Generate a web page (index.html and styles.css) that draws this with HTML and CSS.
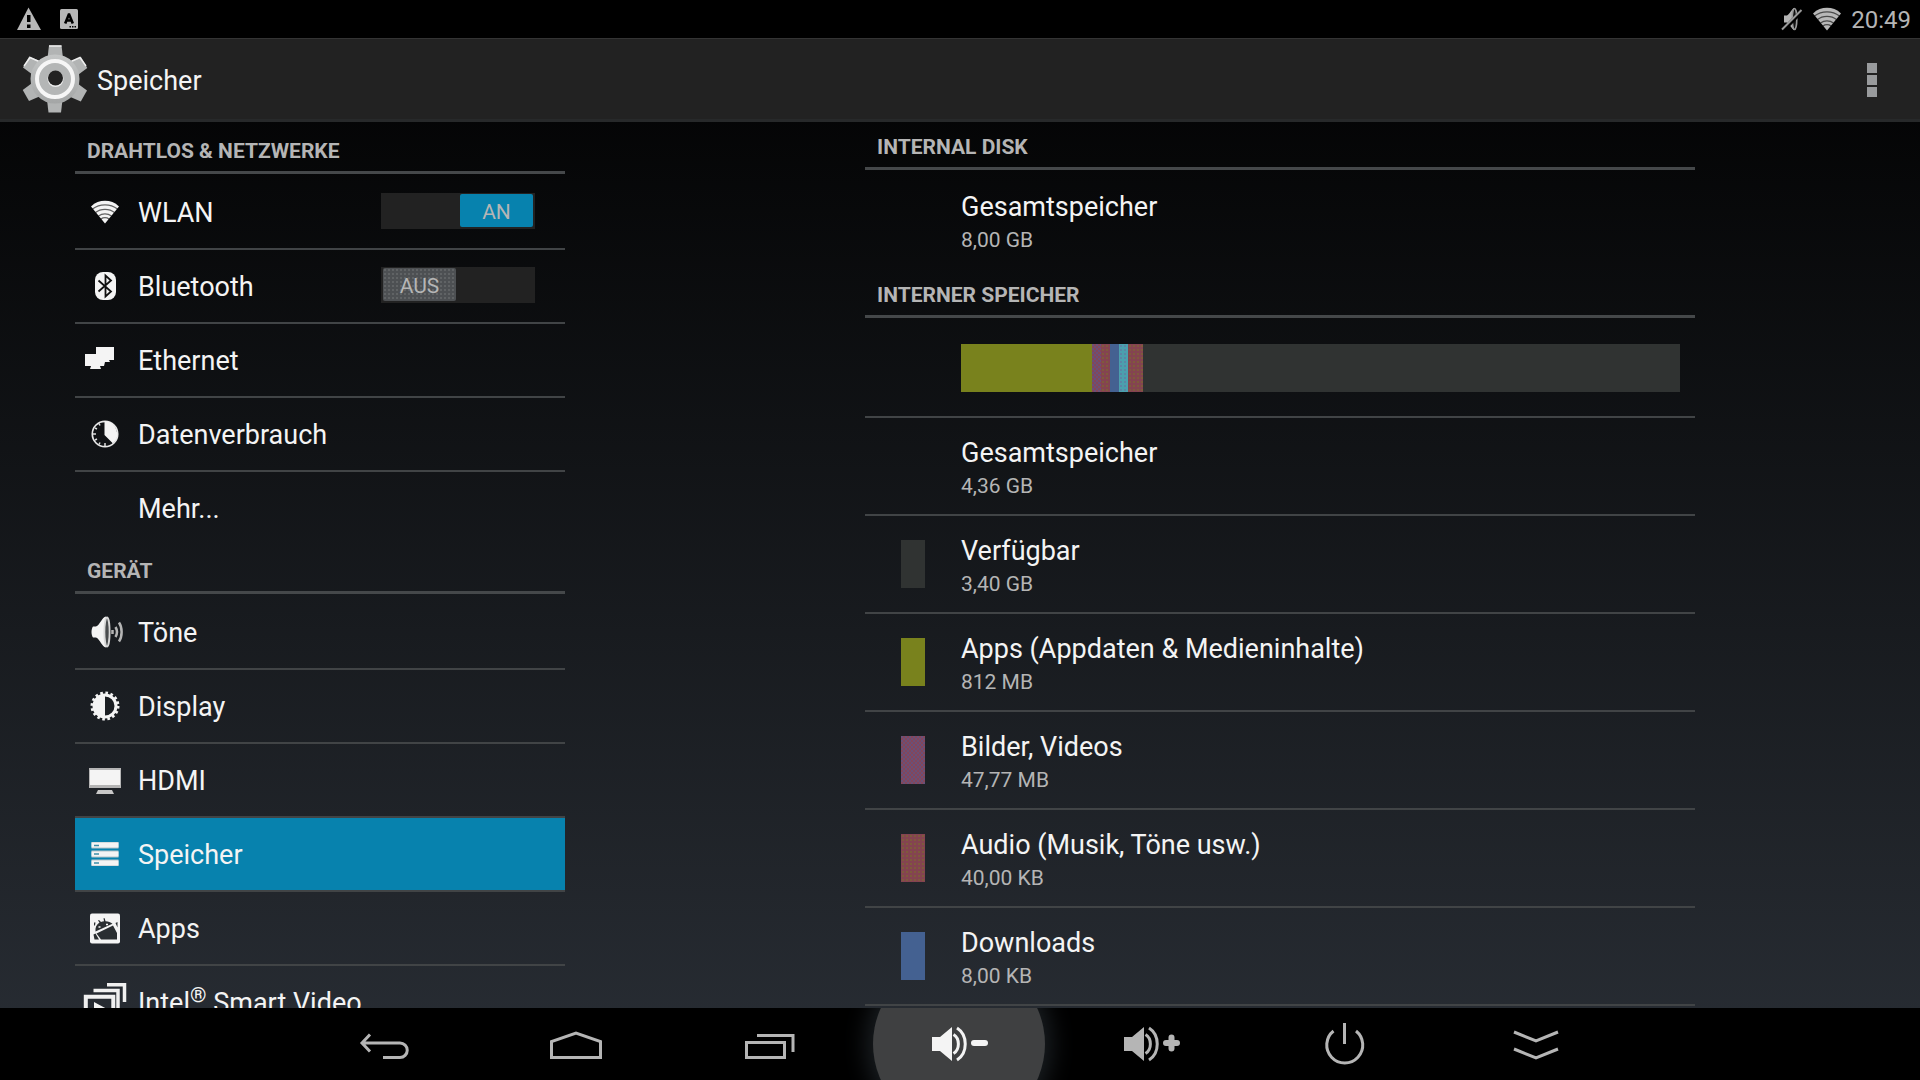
FILE: index.html
```html
<!DOCTYPE html>
<html lang="de">
<head>
<meta charset="utf-8">
<title>Speicher</title>
<link rel="stylesheet" href="styles.css">
</head>
<body>
<svg class="defs" aria-hidden="true">
  <defs>
    <symbol id="wifi" viewBox="0 0 30 24">
      <path fill="currentColor" d="M15 23.500L1 6.500C5 2.500 10 .800 15 .800S25 2.500 29 6.500z"/>
      <g fill="none" stroke="#000" stroke-opacity=".6" stroke-width="1.300">
        <path d="M2.500 9C6 6.300 10.500 4.800 15 4.800S24 6.300 27.500 9"/>
        <path d="M5.500 12.500C8 10.400 11.500 9.300 15 9.300s7 1.100 9.500 3.200"/>
        <path d="M8.500 16c2-1.500 4-2.200 6.500-2.200s4.500.700 6.500 2.200"/>
        <path d="M11 19c1.300-1 2.500-1.300 4-1.300s2.700.300 4 1.300"/>
      </g>
    </symbol>
    <symbol id="speaker" viewBox="0 0 36 36">
      <path fill="currentColor" d="M1 11h8L21 1v34L9 25H1z" />
      <path fill="none" stroke="currentColor" stroke-width="3" d="M22.500 8.500c6.500 4 6.500 15 0 19M26 2c11 7 11 25 0 32"/>
    </symbol>
  </defs>
</svg>

<header class="status">
  <div class="status-group">
    <svg width="26" height="24" viewBox="0 0 26 24" role="img" aria-label="Warnung"><path fill="#b8b8b8" d="M12.500.500L25 23H1z"/><path d="M11 8h3.500v7H11zM11 17.500h3.500V21H11z"/></svg>
    <svg width="18" height="20" viewBox="0 0 18 20" role="img" aria-label="Tastatur"><rect width="18" height="20" rx="1.500" fill="#b8b8b8"/><path fill="none" stroke="#000" stroke-width="2.600" d="M5.200 14.500L8.800 5.500h.4l3.600 9M6.500 11.500h5"/><path d="M9.500 17h1.500v1.500H9.500zM12 17h1.500v1.500H12zM14.500 17H16v1.500h-1.500z"/></svg>
  </div>
  <div class="status-group status-right">
    <svg width="22" height="26" viewBox="0 0 22 26" role="img" aria-label="Stumm"><path fill="#b4b4b4" d="M3 9.500h3C9 8 10.500 3 13 2v22c-2.500-1-4-6-7-7.500H3z"/><ellipse cx="13.500" cy="13" rx="2.300" ry="10.500" fill="#111" stroke="#999" stroke-width="1.600"/><path d="M2 24.500L21 5" stroke="#000" stroke-width="4"/><path d="M1 23.500L20.500 4" stroke="#999" stroke-width="2"/></svg>
    <svg class="status-wifi" width="30" height="24"><use href="#wifi"/></svg>
    <time>20:49</time>
  </div>
</header>

<div class="actionbar">
  <svg class="gear" width="68" height="70" viewBox="0 0 68 70" aria-hidden="true">
    <defs><linearGradient id="metal" x1="0" y1="0" x2="0" y2="1"><stop offset="0" stop-color="#c4c6c6"/><stop offset="1" stop-color="#a4a6a6"/></linearGradient></defs>
    <g fill="#b2b4b4">
      <path d="M26.500 14L28 1.500h12.500L42 14z"/>
      <path d="M26.500 14L28 1.500h12.500L42 14z" transform="rotate(60 34 35)"/>
      <path d="M26.500 14L28 1.500h12.500L42 14z" transform="rotate(120 34 35)"/>
      <path d="M26.500 14L28 1.500h12.500L42 14z" transform="rotate(180 34 35)"/>
      <path d="M26.500 14L28 1.500h12.500L42 14z" transform="rotate(240 34 35)"/>
      <path d="M26.500 14L28 1.500h12.500L42 14z" transform="rotate(300 34 35)"/>
    </g>
    <path d="M28 2h12.500M3 22l6-8.500 9 4M65 22l-6-8.500-9 4" fill="none" stroke="#eee" stroke-width="1.500"/>
    <circle cx="34" cy="35" r="24.500" fill="url(#metal)"/>
    <circle cx="34" cy="35" r="18" fill="#b4b6b6" stroke="#f6f6f6" stroke-width="4"/>
    <circle cx="34.500" cy="35" r="8" fill="#eee"/>
    <circle cx="34.500" cy="34" r="7.500" fill="#222"/>
  </svg>
  <h1>Speicher</h1>
  <button class="overflow" type="button" aria-label="Weitere Optionen"><i></i><i></i><i></i></button>
</div>

<main class="panes">
  <nav class="pane menu">
    <h2>Drahtlos &amp; Netzwerke</h2>
    <ul>
      <li>
        <a href="#wlan"><svg class="icon" viewBox="0 0 48 48"><use href="#wifi" x="9" y="12" width="30" height="24"/></svg><span>WLAN</span></a>
        <label class="switch on"><input type="checkbox" checked aria-label="WLAN"><span>AN</span></label>
      </li>
      <li>
        <a href="#bluetooth"><svg class="icon" viewBox="0 0 48 48"><rect x="14" y="10" width="21" height="28" rx="8" fill="#f4f4f4"/><path d="M17.500 18.500L30 29.500l-5.500 5V13.500l5.500 5-12.500 11" fill="none" stroke="#111" stroke-width="1.800"/></svg><span>Bluetooth</span></a>
        <label class="switch"><input type="checkbox" aria-label="Bluetooth"><span>AUS</span></label>
      </li>
      <li><a href="#ethernet"><svg class="icon" viewBox="0 0 48 48" fill="#f4f4f4"><path d="M15 11h18v13h-5l1 2h-5l-1 4h-4l1 3H9l1-3H4V18h11z"/></svg><span>Ethernet</span></a></li>
      <li><a href="#daten"><svg class="icon" viewBox="0 0 48 48"><circle cx="24" cy="24" r="12.700" fill="none" stroke="#e8e8e8" stroke-width="1.700"/><path fill="#f4f4f4" d="M23.500 11a13 13 0 0 1 8.500 22.500L23.500 25z"/><path stroke="#ddd" stroke-width="1.500" d="M12 24h3M14 18l2 1M18 13.500l1 2M14 30l2-1M18 34.500l1-2M24 36v-3"/></svg><span>Datenverbrauch</span></a></li>
      <li><a href="#mehr"><i class="icon"></i><span>Mehr...</span></a></li>
    </ul>
    <h2>Gerät</h2>
    <ul>
      <li><a href="#toene"><svg class="icon" viewBox="0 0 48 48"><path fill="#f4f4f4" d="M12 18.500h3C19 17 21 9 25 8.500v31C21 39 19 31 15 29.500h-3C10 27 10 21 12 18.500z"/><ellipse cx="26" cy="24" rx="2.600" ry="14.500" fill="#4a4d4f" stroke="#d8d8d8" stroke-width="1.800"/><path fill="none" stroke="#b5b5b5" stroke-width="2.500" d="M31.500 22v4M34.500 19c1.800 3 1.800 7 0 10M38 14.500c3.500 5 3.500 14 0 19"/></svg><span>Töne</span></a></li>
      <li><a href="#display"><svg class="icon" viewBox="0 0 48 48"><circle cx="24" cy="24" r="13" fill="none" stroke="#f4f4f4" stroke-width="3" stroke-dasharray="2.600 2.505"/><circle cx="24" cy="24" r="11" fill="none" stroke="#f4f4f4" stroke-width="3"/><path fill="#f4f4f4" d="M24 12a12 12 0 0 0 0 24z"/></svg><span>Display</span></a></li>
      <li><a href="#hdmi"><svg class="icon" viewBox="0 0 48 48"><path fill="#b5b5b5" d="M8 12h32v20H8z"/><path fill="#f4f4f4" d="M9 14h30v15H9z"/><path fill="#c8c8c8" d="M17 34h14l2 4H15z"/></svg><span>HDMI</span></a></li>
      <li class="current"><a href="#speicher" aria-current="page"><svg class="icon" viewBox="0 0 48 48"><g fill="#b8c4c8"><path d="M10.500 12h27v6.500h-27zM10.500 20.500h27v7h-27zM10.500 29.500h27v6.500h-27z"/></g><g fill="#f4f4f4"><path d="M10.500 12.500h27v5h-27zM10.500 21.500h27v5h-27zM10.500 30.500h27v5h-27z"/></g><path stroke="#3d8da8" stroke-width="1.500" d="M13 15.500h5M13 24h5M13 33h5"/></svg><span>Speicher</span></a></li>
      <li><a href="#apps"><svg class="icon" viewBox="0 0 48 48"><rect x="9" y="9.500" width="30" height="30" rx="2" fill="#f4f4f4"/><g fill="#2a2e31"><path d="M14.500 27.500c-.5-4 1-7 4-9l-1.500-2 1-.5 2 2c1-.5 2-.7 3-.7l-.5-3h1.200l.8 3c3 .2 5 1 7 2.500z"/><path d="M15.500 29.500L32 21.500l4 7.500v6.500H20z"/><path d="M34.500 19l2-1v5.500zM12.500 30.500l2-1 3.500 6h-4.500zM13 18.500h1.500l-.5 3H13z"/></g><path stroke="#f4f4f4" stroke-width="1.500" d="M17.500 23h2M25 20.500h2"/></svg><span>Apps</span></a></li>
      <li><a href="#video"><svg class="icon" viewBox="0 0 48 48"><g fill="none" stroke="#f0f0f0" stroke-width="3.500"><path d="M26 6.800h17.500V24M12.500 12.500H37V31"/><path d="M4.800 18.800h27.500V40H4.800z" stroke-width="4"/></g><path fill="#f4f4f4" d="M13 24l13 7-13 7z"/></svg><span>Intel<sup>®</sup> Smart Video</span></a></li>
    </ul>
  </nav>

  <section class="pane storage">
    <h2>Internal Disk</h2>
    <ul>
      <li><div class="entry"><b>Gesamtspeicher</b><small>8,00 GB</small></div></li>
    </ul>
    <h2>Interner Speicher</h2>
    <ul>
      <li>
        <div class="usage" role="img" aria-label="Speicherbelegung">
          <i class="apps" style="width:18.2%"></i><i class="media" style="width:1.25%"></i><i class="audio" style="width:1.25%"></i><i class="downloads" style="width:1.25%"></i><i class="cache" style="width:1.25%"></i><i class="audio" style="width:2.1%"></i>
        </div>
      </li>
      <li><div class="entry"><b>Gesamtspeicher</b><small>4,36 GB</small></div></li>
      <li><i class="swatch free"></i><div class="entry"><b>Verfügbar</b><small>3,40 GB</small></div></li>
      <li><i class="swatch apps"></i><div class="entry"><b>Apps (Appdaten &amp; Medieninhalte)</b><small>812 MB</small></div></li>
      <li><i class="swatch media"></i><div class="entry"><b>Bilder, Videos</b><small>47,77 MB</small></div></li>
      <li><i class="swatch audio"></i><div class="entry"><b>Audio (Musik, Töne usw.)</b><small>40,00 KB</small></div></li>
      <li><i class="swatch downloads"></i><div class="entry"><b>Downloads</b><small>8,00 KB</small></div></li>
    </ul>
  </section>
</main>

<footer class="navbar">
  <button type="button" aria-label="Zurück"><svg viewBox="0 0 72 72"><path d="M22 26.500l-8 8.500 8 8.500M14 35h38a7.200 7.200 0 0 1 0 14.500H35"/></svg></button>
  <button type="button" aria-label="Startseite"><svg viewBox="0 0 72 72"><path d="M11.500 49.500v-16L36 25l24.500 8.500v16z"/></svg></button>
  <button type="button" aria-label="Letzte Apps"><svg viewBox="0 0 72 72"><path d="M14.500 34.500h38v15h-38zM25 27.500h36V44"/></svg></button>
  <button type="button" class="pressed" aria-label="Leiser"><svg viewBox="0 0 72 72"><use href="#speaker" x="7" y="18" width="36" height="36"/><path d="M50 35h11" stroke-width="6" stroke-linecap="round"/></svg></button>
  <button type="button" aria-label="Lauter"><svg viewBox="0 0 72 72"><use href="#speaker" x="7" y="18" width="36" height="36"/><path d="M50 35h11M55.500 29.500v11" stroke-width="6" stroke-linecap="round"/></svg></button>
  <button type="button" aria-label="Ausschalten"><svg viewBox="0 0 72 72"><path d="M25.500 23a18 18 0 1 0 22.500 0M36.500 15v21"/></svg></button>
  <button type="button" aria-label="Leiste ausblenden"><svg viewBox="0 0 72 72"><path d="M14 24l22 9 22-9M14 41l22 9 22-9"/></svg></button>
</footer>
</body>
</html>
```
FILE: styles.css
```css
* { box-sizing: border-box; }

body {
  margin: 0;
  height: 100vh;
  display: flex;
  flex-direction: column;
  overflow: hidden;
  background: linear-gradient(#000, #292e35);
  color: #f4f4f4;
  font-family: Roboto, "Noto Sans", sans-serif;
  font-size: 27px;
}

.defs { position: absolute; width: 0; height: 0; }
svg { display: block; }
ul { list-style: none; margin: 0; padding: 0; }
button { margin: 0; padding: 0; border: 0; background: none; }

.status {
  flex: none;
  height: 38px;
  padding: 0 9px 0 16px;
  display: flex;
  align-items: center;
  justify-content: space-between;
  background: #000;
  color: #b5b5b5;
  font-size: 24px;
}
.status-group { display: flex; align-items: center; gap: 18px; }
.status-right { gap: 9px; }
.status-wifi { color: #b8b8b8; }
.status time { padding-top: 2px; }

.actionbar {
  flex: none;
  height: 84px;
  padding: 0 40px 0 21px;
  display: flex;
  align-items: center;
  background: #222;
  border-top: 1px solid #343434;
  border-bottom: 3px solid #27292a;
}
.actionbar h1 {
  margin: 0;
  padding: 3px 0 0 8px;
  flex: 1;
  font-size: 27px;
  font-weight: 400;
}
.overflow { display: grid; gap: 2px; padding: 2px 3px 0; }
.overflow i { width: 10px; height: 10px; background: #999b9d; }

.panes {
  flex: 1;
  min-height: 0;
  overflow: hidden;
  padding: 0 225px 0 75px;
  display: grid;
  grid-template-columns: 49fr 83fr;
  gap: 300px;
}
.menu { padding-top: 4px; }

.pane h2 {
  height: 48px;
  margin: 0 0 2px;
  padding: 0 12px;
  border-bottom: 3px solid #45484a;
  color: #b5b5b5;
  font-size: 21px;
  font-weight: 700;
  line-height: 51px;
  text-transform: uppercase;
}
.pane li {
  display: flex;
  align-items: center;
  border-bottom: 2px solid #414446;
}
.pane li:last-child { border-color: transparent; }

.menu li { height: 74px; padding-right: 30px; }
.menu a {
  flex: 1;
  height: 100%;
  padding-left: 6px;
  display: flex;
  align-items: center;
  gap: 9px;
  color: inherit;
  text-decoration: none;
  white-space: nowrap;
}
.menu a span { padding-top: 2px; }
.menu .current { background: #0782ae; background-clip: padding-box; }
.icon { width: 48px; height: 48px; flex: none; }
sup { font-size: 21px; line-height: 0; }

.switch {
  position: relative;
  width: 154px;
  height: 36px;
  margin-bottom: 2px;
  padding: 1px 2px;
  display: flex;
  background: #222;
}
.switch.on { justify-content: flex-end; }
.switch input { position: absolute; inset: 0; margin: 0; opacity: 0; }
.switch span {
  width: 73px;
  height: 33px;
  border-radius: 2px;
  background: radial-gradient(#606365 1px, #4d5053 1px) 0 0 / 4px 4px;
  color: #b5b5b5;
  font-size: 21px;
  line-height: 37px;
  text-align: center;
}
.switch.on span { background: #0782ae; }

.storage li { height: 98px; padding: 0 15px 0 96px; }
.storage li:last-child { border-color: #414446; }
.storage ul:first-of-type li { border-color: transparent; }
.entry { display: grid; padding-top: 4px; }
.entry b { font-weight: 400; line-height: 36px; }
.entry small { color: #b5b5b5; font-size: 21px; line-height: 30px; }

.swatch { width: 24px; height: 48px; margin: 0 36px 0 -60px; }
.usage { flex: 1; height: 48px; display: flex; background: #303332; }
.free { background: #303332; }
.apps { background: #79821d; }
.media { background: repeating-conic-gradient(#84465a 0 25%, #6a5078 0 50%) 0 0 / 4px 4px; }
.audio { background: radial-gradient(#7f5a3c 1px, #844450 1px) 0 0 / 4px 4px; }
.downloads { background: #446191; }
.cache { background: radial-gradient(#5b86a6 1px, #4ba0ae 1px) 0 0 / 4px 4px; }

.navbar {
  flex: none;
  height: 72px;
  display: flex;
  justify-content: center;
  overflow: hidden;
  background: #000;
}
.navbar button {
  width: 10%;
  display: flex;
  justify-content: center;
  color: #b5b5b5;
}
.navbar svg {
  width: 72px;
  height: 72px;
  fill: none;
  stroke: currentColor;
  stroke-width: 3;
}
.navbar use { stroke: none; }
.navbar .pressed { position: relative; color: #f4f4f4; }
.navbar .pressed svg { position: relative; }
.navbar .pressed::before {
  content: "";
  position: absolute;
  left: calc(50% - 87px);
  top: -50px;
  width: 172px;
  height: 172px;
  border-radius: 50%;
  background: #3f4041;
  box-shadow: 0 0 24px 6px #1c2125;
}
```
